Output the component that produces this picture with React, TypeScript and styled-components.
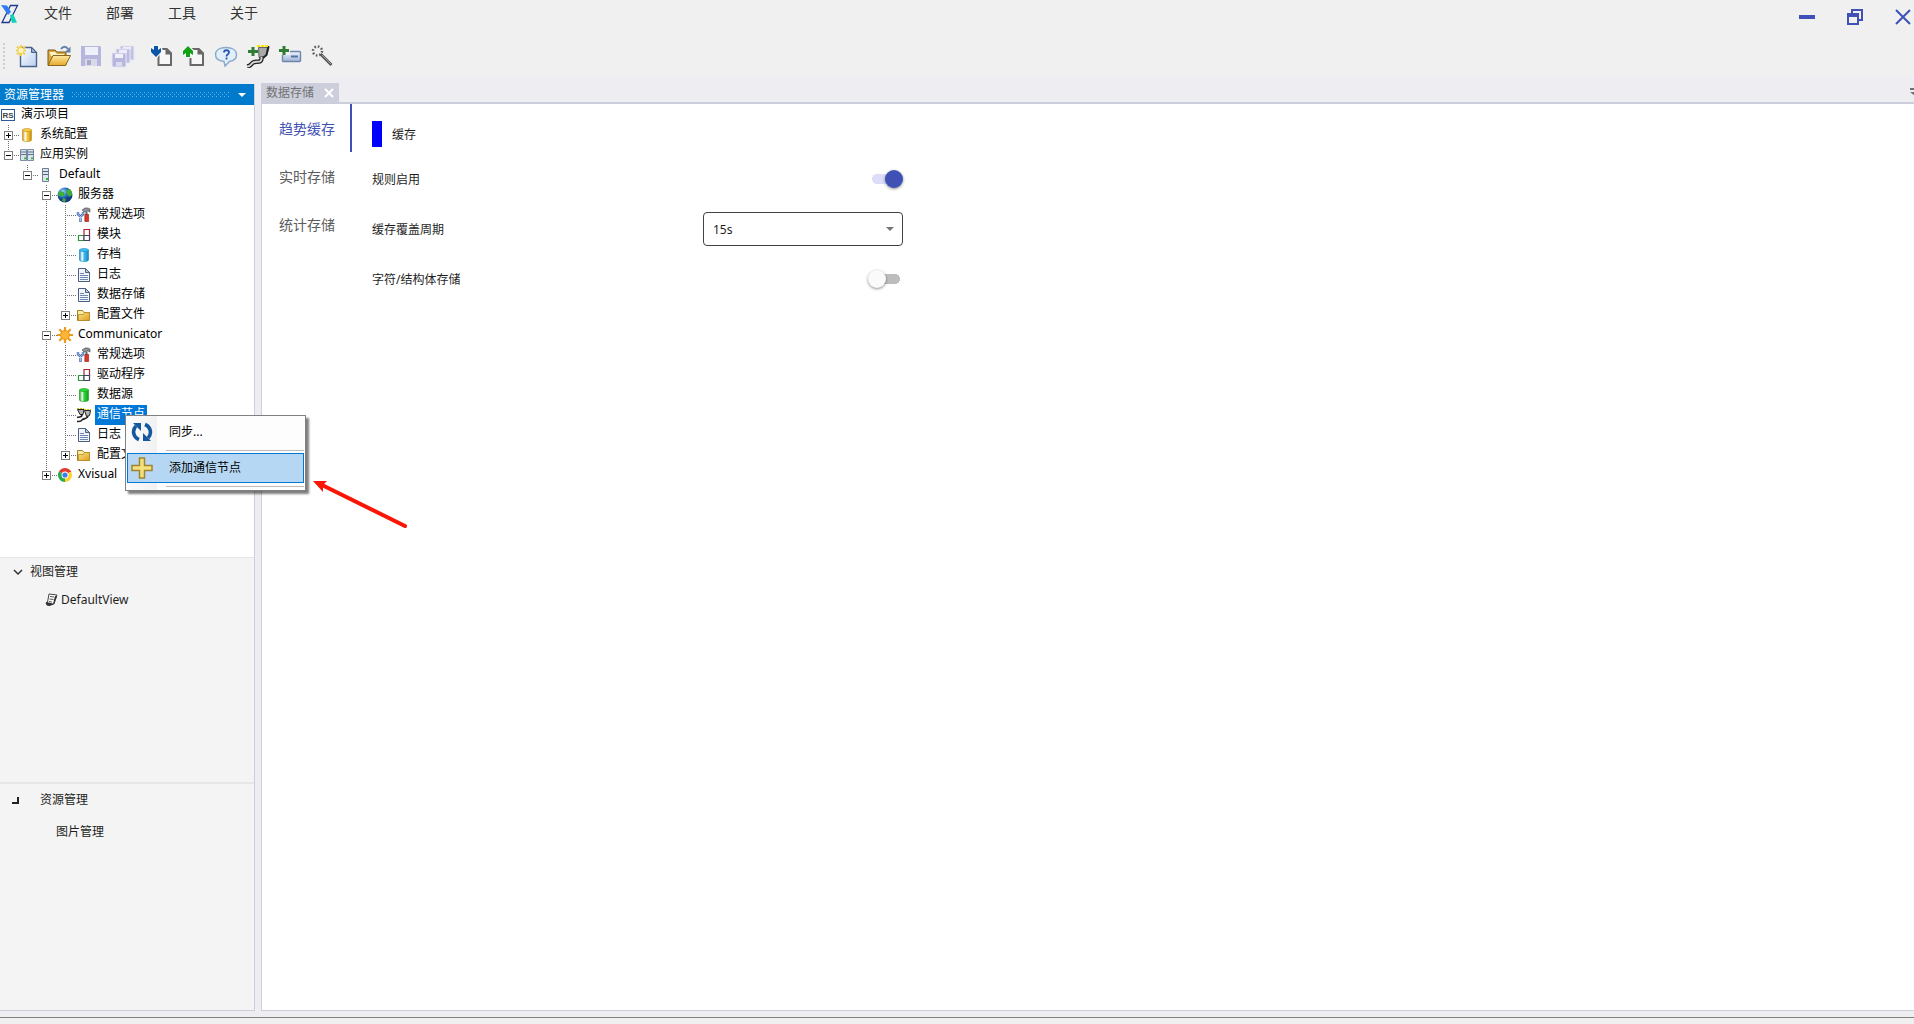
import React, { useId, useState } from "react";
import styled, { createGlobalStyle, css } from "styled-components";

const font = `"Noto Sans", "Noto Sans CJK SC", sans-serif`;
const line = "#cccedb";
const indigo = "#3f51b5";

const Global = createGlobalStyle`
  * { box-sizing: border-box; }
  body { margin: 0; background: #f0f0f0; font: 12px/20px ${font}; color: #1e1e1e; }
  button, select, input { font: inherit; color: inherit; margin: 0; padding: 0; border: 0; background: none; }
  ul { list-style: none; margin: 0; padding: 0; }
  svg { display: block; flex: none; }
`;

const Page = styled.div`
  position: relative;
  display: flex;
  flex-direction: column;
  min-height: 100vh;
  overflow: hidden;
`;

/* ---------- header ---------- */
const TitleBar = styled.header`
  display: flex;
  align-items: flex-start;
  height: 34px;
`;
const MenuBar = styled.nav`
  display: flex;
  gap: 34px;
  margin-left: 24px;
  padding-top: 2px;
  flex: 1;
`;
const MenuButton = styled.button`
  font-size: 14px;
  line-height: 22px;
  white-space: nowrap;
  color: #333;
`;
const LogoBox = styled.div`
  padding-top: 4px;
`;
const WindowButtons = styled.div`
  display: flex;
  gap: 26px;
  padding-top: 6px;
`;
const WindowButton = styled.button`
  display: grid;
  place-items: center;
  width: 22px;
  height: 22px;
`;
const ToolBar = styled.div`
  display: flex;
  align-items: center;
  height: 43px;
  padding-left: 3px;
`;
const Grip = styled.span`
  width: 2px;
  height: 26px;
  margin-right: 6px;
  background: repeating-linear-gradient(#cfcfcf 0 2px, transparent 2px 4px);
`;
const ToolButton = styled.button<{ $gap?: boolean }>`
  display: grid;
  place-items: center;
  width: 32px;
  height: 32px;
  margin-left: ${(p) => (p.$gap ? 7 : 0)}px;
`;

/* ---------- dock ---------- */
const Dock = styled.main`
  flex: 1;
  display: flex;
  gap: 6px;
  padding: 6px 0;
  background: #eeeef2;
  border-bottom: 1px solid #808080;
`;
const StatusStrip = styled.footer`
  height: 6px;
  background: #f0f0f0;
`;
const SidePanel = styled.aside`
  display: flex;
  flex-direction: column;
  width: 255px;
  flex: none;
  padding-top: 1px;
`;
const SideTitle = styled.div`
  display: flex;
  align-items: center;
  gap: 8px;
  height: 21px;
  padding: 0 8px 0 4px;
  background: #007acc;
  color: #fff;
  border-right: 1px solid ${line};
`;
const SideTitleText = styled.h2`
  margin: 0;
  font-size: 12px;
  line-height: 20px;
  font-weight: 400;
  white-space: nowrap;
`;
const DotFill = styled.svg`
  flex: 1;
  min-width: 0;
  height: 5px;
`;
const SideBody = styled.div`
  flex: 1;
  display: grid;
  grid-template-rows: 452fr 225fr 228fr;
  border: 1px solid ${line};
  border-width: 0 1px 1px 0;
`;
const TreeArea = styled.div`
  background: #fff;
  color: #000;
`;
const SubPanel = styled.section<{ $divider: number }>`
  background: #f4f4f4;
  border-top: ${(p) => p.$divider}px solid #e6e6e6;
`;
const SubHeader = styled.button<{ $pad: number; $gap: number; $tall?: boolean }>`
  display: flex;
  align-items: center;
  gap: ${(p) => p.$gap}px;
  height: ${(p) => (p.$tall ? 32 : 28)}px;
  padding-left: ${(p) => p.$pad}px;
`;
const SubItem = styled.button<{ $pad: number }>`
  display: flex;
  align-items: center;
  gap: 3px;
  height: 28px;
  padding-left: ${(p) => p.$pad}px;
  margin-top: ${(p) => (p.$pad > 50 ? 2 : 0)}px;
`;

/* ---------- tree ---------- */
const TreeRow = styled.div`
  position: relative;
  display: flex;
  height: 20px;
`;
type Vert = "none" | "half" | "full";
const Guide = styled.span<{ $vert: Vert; $horiz?: boolean }>`
  flex: none;
  width: 19px;
  height: 20px;
  padding: 6px 0 0 4px;
  background-repeat: no-repeat;
  background-image: repeating-linear-gradient(#707070 0 1px, transparent 1px 2px),
    repeating-linear-gradient(90deg, #707070 0 1px, transparent 1px 2px);
  background-position: 8px 0, 8px 10px;
  background-size: ${(p) =>
    `${p.$vert === "none" ? "0 0" : p.$vert === "half" ? "1px 11px" : "1px 20px"}, ${p.$horiz ? "11px 1px" : "0 0"}`};
`;
const Expander = styled.button<{ $open: boolean }>`
  display: block;
  width: 9px;
  height: 9px;
  border: 1px solid #808080;
  background-color: #fff;
  background-repeat: no-repeat;
  background-position: center;
  background-image: linear-gradient(#000, #000), linear-gradient(#000, #000);
  background-size: 5px 1px, ${(p) => (p.$open ? "0 0" : "1px 5px")};
`;
const IconCell = styled.span`
  display: grid;
  place-items: center;
  width: 16px;
  height: 20px;
  flex: none;
`;
const NodeLabel = styled.button<{ $selected?: boolean }>`
  margin-left: 3px;
  padding: 0 2px 2px;
  line-height: 18px;
  white-space: nowrap;
  ${(p) =>
    p.$selected &&
    css`
      background: #0078d7;
      color: #fff;
    `}
`;

/* ---------- context menu ---------- */
const ContextMenu = styled.div`
  position: absolute;
  z-index: 2;
  left: 125px;
  top: 10px;
  width: 181px;
  padding: 1px;
  border: 1px solid #808080;
  background: linear-gradient(90deg, #fcfcfc, #f1f1f1 31px, #fdfdfd 31px);
  box-shadow: 3px 3px 2px rgba(0, 0, 0, 0.5);
`;
const MenuItem = styled.button<{ $active?: boolean }>`
  display: flex;
  align-items: center;
  gap: 16px;
  width: 100%;
  height: 30px;
  padding-left: 3px;
  border: 1px solid ${(p) => (p.$active ? "#0078d7" : "transparent")};
  background: ${(p) => (p.$active ? "#b5d7f3" : "transparent")};
`;
const Separator = styled.hr`
  height: 1px;
  margin: 3px 0 2px 39px;
  border: 0;
  background: #bdbdbd;
`;
const Pointer = styled.svg`
  position: absolute;
  z-index: 3;
  left: 310px;
  top: 476px;
  pointer-events: none;
`;

/* ---------- document area ---------- */
const DocArea = styled.section`
  flex: 1;
  min-width: 0;
  display: flex;
  flex-direction: column;
  border: 1px solid ${line};
  border-width: 0 0 1px 1px;
`;
const TabStrip = styled.div`
  display: flex;
  justify-content: space-between;
  height: 21px;
  background: #eeeef2;
  border-bottom: 2px solid ${line};
`;
const DocTab = styled.div`
  display: flex;
  align-items: center;
  gap: 10px;
  padding: 1px 5px 0 4px;
  background: ${line};
  color: #717171;
`;
const Overflow = styled.button`
  width: 4px;
  padding-top: 5px;
  overflow: hidden;
  align-self: flex-start;
`;
const DocBody = styled.div`
  flex: 1;
  display: flex;
  background: #fff;
`;
const SideTabs = styled.nav`
  width: 90px;
  flex: none;
`;
const SideTab = styled.button<{ $active: boolean }>`
  display: block;
  width: 100%;
  height: 48px;
  padding-left: 17px;
  padding-top: 1px;
  text-align: left;
  font-size: 14px;
  color: ${(p) => (p.$active ? indigo : "#5c5c5c")};
  border-right: 2px solid ${(p) => (p.$active ? indigo : "transparent")};
`;
const Form = styled.form`
  flex: 1;
  max-width: 551px;
  padding: 17px 0 0 20px;
`;
const Heading = styled.h3`
  display: flex;
  align-items: center;
  gap: 10px;
  height: 26px;
  margin: 0 0 7px;
  font-size: 12px;
  line-height: 28px;
  font-weight: 400;
  &::before {
    content: "";
    width: 10px;
    height: 26px;
    background: #00f;
  }
`;
const HeadingText = styled.span`
  padding-top: 2px;
`;
const Field = styled.div`
  display: flex;
  align-items: center;
  justify-content: space-between;
  height: 50px;
`;
const FieldLabel = styled.label`
  padding-top: 2px;
`;
const Switch = styled.input`
  appearance: none;
  display: flex;
  width: 35px;
  height: 18px;
  background: radial-gradient(circle at 27px 9px, #bdbdbd 5px, transparent 5px),
    linear-gradient(#bdbdbd, #bdbdbd) 9px 4px / 18px 10px no-repeat;
  &::before {
    content: "";
    flex: none;
    width: 18px;
    height: 18px;
    border-radius: 9px;
    background: #fafafa;
    box-shadow: 0 1px 3px rgba(0, 0, 0, 0.45);
  }
  &:checked {
    background: radial-gradient(circle at 9px 9px, #dcddf8 5px, transparent 5px),
      linear-gradient(#dcddf8, #dcddf8) 9px 4px / 17px 10px no-repeat;
  }
  &:checked::before {
    margin-left: 17px;
    background: ${indigo};
  }
`;
const SelectWrap = styled.div`
  display: grid;
  grid-template-columns: 1fr 16px;
  align-items: center;
  width: 200px;
  height: 34px;
  border: 1px solid #424242;
  border-radius: 4px;
  & > * {
    grid-row: 1;
  }
  & > svg {
    grid-column: 2;
    pointer-events: none;
  }
`;
const Select = styled.select`
  appearance: none;
  grid-column: 1 / 3;
  height: 100%;
  padding: 2px 0 0 9px;
`;

/* ---------- icons ---------- */
const Logo = () => (
  <svg width="20" height="20" viewBox="0 0 20 20">
    <path d="M10.500 1.500h7L9 18.500H2z" fill="#f0f0f0" stroke="#1d3a8c" strokeWidth="1.300" />
    <path d="M1 1l6 .5L11 8l-3 3z" fill="#2e7bf6" />
    <path d="M10 11l3-1 4 8.500-5 .5z" fill="#12d3b4" />
  </svg>
);

const SheetArt = () => (
  <>
    <path d="M8.500 5h8l4.500 4.500V21H8.500z" fill="#f7f7f7" stroke="#686868" strokeWidth="2" />
    <path d="M15.500 4H17l5 5v1.500h-6.500z" fill="#686868" />
  </>
);
const tools: { name: string; gap?: boolean; art: React.ReactNode }[] = [
  {
    name: "新建",
    art: (
      <>
        <defs>
          <linearGradient id="pg" x2="1" y2="1"><stop stopColor="#fff" /><stop offset="1" stopColor="#b9cff0" /></linearGradient>
          <linearGradient id="fo" x2="0" y2="1"><stop stopColor="#fde9a0" /><stop offset="1" stopColor="#e5a82a" /></linearGradient>
        </defs>
        <path d="M5.500 3.500h11l5 5v14h-16z" fill="url(#pg)" stroke="#4a628c" strokeWidth="1.400" />
        <path d="M16.500 3.500v5h5z" fill="#93a9cf" stroke="#4a628c" />
        <path d="M6 1v11M1 6.500h10M2 2.500l8 8M10 2.500l-8 8" stroke="#f3cf4a" strokeWidth="2" />
        <circle cx="6" cy="6.500" r="2.500" fill="#fff6c4" />
      </>
    ),
  },
  {
    name: "打开",
    art: (
      <>
        <path d="M1 21V6h7l2 2h9v13z" fill="#d9a93c" stroke="#7a5b1c" />
        <path d="M2.500 8H8l2 2h7v2H4z" fill="#fdf3c8" />
        <path d="M1 21.500L6 11.500h17.500l-5 10z" fill="url(#fo)" stroke="#8a661b" />
        <path d="M14 5c2-3 5-3 7 0" fill="none" stroke="#6482a8" strokeWidth="2" />
        <path d="M23.500 2.500v6h-6z" fill="#6482a8" />
      </>
    ),
  },
  {
    name: "保存",
    art: (
      <>
        <path d="M2 2h19l1 1v19H2z" fill="#b7b6de" />
        <path d="M6 3h13v8H6z" fill="#f0f0fa" />
        <path d="M6 15h12v7H6z" fill="#d9d9ea" />
        <path d="M8 16h4v5H8z" fill="#a8abc6" />
      </>
    ),
  },
  {
    name: "全部保存",
    art: (
      <>
        <path d="M9 2h14v14H9z" fill="#c3c2e3" stroke="#e6e6f4" />
        <path d="M12 3h8v3h-8z" fill="#eeeef8" />
        <path d="M5 5h14v14H5z" fill="#bcbbe0" stroke="#e6e6f4" />
        <path d="M8 6h8v3H8z" fill="#eeeef8" />
        <path d="M1 9h14v14H1z" fill="#b7b6de" stroke="#e6e6f4" />
        <path d="M4 10h8v4H4z" fill="#f0f0fa" />
        <path d="M5 18h6v4H5z" fill="#dcdcec" />
      </>
    ),
  },
  {
    name: "导入",
    gap: true,
    art: (
      <>
        <SheetArt />
        <path d="M1 1h10l2 6-6 7h-2L0 8z" fill="#f6f6f6" />
        <path d="M4 2h4v4l3-2v4l-5 5-5-5V4l3 2z" fill="#0a55a5" />
      </>
    ),
  },
  {
    name: "导出",
    art: (
      <>
        <SheetArt />
        <path d="M0 7l6-6 7 6v3l-3 4H4z" fill="#f6f6f6" />
        <path d="M4 13V9l-3 2V7l5-5 5 5v4L8 9v4z" fill="#12a114" />
      </>
    ),
  },
  {
    name: "帮助",
    art: (
      <>
        <path d="M12 3.500c6 0 10.500 2.500 10.500 7 0 4-3 6.500-7 7L11 22l-1-4.500c-5-.5-8.500-3-8.500-7 0-4.500 4.500-7 10.500-7z" fill="#e1effa" stroke="#8aa9ca" strokeWidth="1.400" />
        <path d="M10 8.500c0-3 5-3 5 0 0 2-2.500 1.500-2.500 4M12.500 13.500v2" fill="none" stroke="#2a55b5" strokeWidth="1.800" />
      </>
    ),
  },
  {
    name: "添加通道",
    art: (
      <>
        <path d="M12.500 3.500H23l-2 7-4 3h-4z" fill="#a9a9a9" stroke="#666" />
        <path d="M22.500 2l-2 9-3 2.500h-3" fill="none" stroke="#222" strokeWidth="2" />
        <path d="M15.500 13c.5 6-3 4.500-7 5-4 .5-2 4-7.500 4.500" fill="none" stroke="#222" strokeWidth="4.500" />
        <path d="M15.500 13c.5 6-3 4.500-7 5-4 .5-2 4-7.500 4.500" fill="none" stroke="#d4d4d4" strokeWidth="2" />
        <path d="M11 2h12" stroke="#f7ea00" strokeWidth="2" strokeDasharray="3 1" />
        <path d="M7 3v9M2 7.500h10" stroke="#2e7d32" strokeWidth="3" />
      </>
    ),
  },
  {
    name: "添加设备",
    art: (
      <>
        <defs>
          <linearGradient id="dv" x2="0" y2="1"><stop stopColor="#eef4fc" /><stop offset="1" stopColor="#9fb4d6" /></linearGradient>
        </defs>
        <rect x="4.500" y="7.500" width="18" height="10" rx="1" fill="url(#dv)" stroke="#6f86ac" strokeWidth="1.400" />
        <path d="M13 12.500h7" stroke="#5873a2" strokeWidth="2" />
        <path d="M1 1h11v10H1z" fill="#f0f0f0" />
        <path d="M6 2v9M1 6.500h10" stroke="#2e7d32" strokeWidth="3" />
      </>
    ),
  },
  {
    name: "向导",
    art: (
      <>
        <circle cx="7.500" cy="7" r="4.500" fill="none" stroke="#5a5a5a" strokeWidth="2.500" strokeDasharray="1.600 1.900" />
        <path d="M10.500 10l11 11" stroke="#5a5a5a" strokeWidth="3" />
        <path d="M12 11l9 9" stroke="#9a9a9a" />
      </>
    ),
  },
];

const Cyl = ({ a, b }: { a: string; b: string }) => {
  const id = useId();
  return (
    <svg width="16" height="16" viewBox="0 0 16 16">
      <defs>
        <linearGradient id={id}><stop stopColor={b} /><stop offset=".3" stopColor="#fff" /><stop offset=".5" stopColor={a} /><stop offset="1" stopColor={b} /></linearGradient>
      </defs>
      <path d="M3.500 3v10c0 2 9 2 9 0V3z" fill={`url(#${id})`} stroke={b} strokeWidth=".6" />
      <ellipse cx="8" cy="3" rx="4.500" ry="1.500" fill={a} stroke={b} strokeWidth=".6" />
    </svg>
  );
};
const Tower = ({ x = 0 }: { x?: number }) => (
  <g transform={`translate(${x} 0)`}>
    <path d="M.5 1.500h6v13h-6z" fill="#dbe4ee" stroke="#6b7f96" />
    <path d="M1 4.500h5M1 7.500h5" stroke="#53677f" />
    <path d="M4 11h2v2H4z" fill="#2cbd2c" />
  </g>
);
const icons: Record<string, React.ReactNode> = {
  rs: (
    <svg width="16" height="16" viewBox="0 0 16 16" fontFamily="Liberation Sans" fontWeight="700" fontSize="8">
      <rect x="1.500" y="2.500" width="13" height="11" fill="#fff" stroke="#2b5a94" />
      <text x="2.500" y="11" fill="#444">RS</text>
    </svg>
  ),
  gold: <Cyl a="#f6cf4f" b="#c58b0a" />,
  blue: <Cyl a="#3fc0f0" b="#1486c0" />,
  green: <Cyl a="#2edb3a" b="#109a1c" />,
  racks: (
    <svg width="16" height="12" viewBox="0 1 16 14" preserveAspectRatio="none"><Tower x={1} /><Tower x={8} /></svg>
  ),
  rack: (
    <svg width="16" height="16" viewBox="0 0 16 16"><Tower x={4} /></svg>
  ),
  globe: (
    <svg width="16" height="16" viewBox="0 0 16 16">
      <defs><radialGradient id="gl" cx=".35" cy=".3"><stop stopColor="#b5dcff" /><stop offset=".6" stopColor="#2b78d2" /><stop offset="1" stopColor="#153c84" /></radialGradient></defs>
      <circle cx="8" cy="8" r="7.500" fill="url(#gl)" />
      <path d="M1 8c0-2 1-3 2-4l4 1 1 3-3 2zM9 3l4-1c2 2 2 4 2 6l-3 2-2-3zM6 11l3 1-1 3-3-1z" fill="#3fae3b" />
    </svg>
  ),
  sun: (
    <svg width="16" height="16" viewBox="0 0 16 16">
      <path d="M8 0v16M0 8h16M2.300 2.300l11.400 11.400M13.700 2.300L2.300 13.700" stroke="#f09a1c" strokeWidth="2.200" />
      <circle cx="8" cy="8" r="4.500" fill="#fbb437" stroke="#ee960c" />
    </svg>
  ),
  chrome: (
    <svg width="16" height="16" viewBox="0 0 16 16">
      <path d="M8 8L1.930 4.500A7 7 0 0 1 14.060 4.500z" fill="#e33b2e" />
      <path d="M8 8L1.930 4.500A7 7 0 0 0 8 15z" fill="#2da94f" />
      <path d="M8 8L14.060 4.500A7 7 0 0 1 8 15z" fill="#fdd22f" />
      <path d="M8 4.500h6.060" stroke="#e33b2e" />
      <circle cx="8" cy="8" r="3.500" fill="#fff" />
      <circle cx="8" cy="8" r="2.600" fill="#3b7ded" />
    </svg>
  ),
  tools: (
    <svg width="16" height="16" viewBox="0 0 16 16">
      <path d="M2 5v2.500L4.500 9.500 7 7.500V5M4.500 9v6" fill="none" stroke="#3f68b0" strokeWidth="2.400" />
      <path d="M2 5v2.500L4.500 9.500 7 7.500V5M4.500 9v5.500" fill="none" stroke="#c3d5f2" strokeWidth=".8" />
      <path d="M6 3l3-2h3l2 1v3l-2-1-3 1H8z" fill="#8b9298" stroke="#444" strokeWidth=".6" />
      <path d="M9.500 5h2v3h-2z" fill="#666" />
      <path d="M8.800 7.500h3.800v7H8.800z" fill="#d8382c" stroke="#8b1510" strokeWidth=".6" />
    </svg>
  ),
  blocks: (
    <svg width="16" height="16" viewBox="0 0 16 16" fill="#fff">
      <path d="M2.500 8.500H8v5H2.500z" stroke="#2d9440" strokeWidth="1.200" />
      <path d="M8 2.500h5.500v6H8z" stroke="#b02332" strokeWidth="1.200" />
      <path d="M8 8.500h5.500v5H8z" stroke="#44405e" strokeWidth="1.200" />
    </svg>
  ),
  doc: (
    <svg width="16" height="16" viewBox="0 0 16 16">
      <path d="M2.500 1.500h7l4 4v9h-11z" fill="#f2f6fc" stroke="#4b5f80" />
      <path d="M9.500 1.500v4h4z" fill="#b9c8de" stroke="#4b5f80" />
      <path d="M4 6.500h4M4 8.500h8M4 10.500h8M4 12.500h8" fill="none" stroke="#7088ad" />
    </svg>
  ),
  folder: (
    <svg width="16" height="16" viewBox="0 0 16 16">
      <defs><linearGradient id="fd" x2="1" y2="1"><stop stopColor="#fde58b" /><stop offset="1" stopColor="#dd9d20" /></linearGradient></defs>
      <path d="M1.500 13.500v-10h5l1.500 2h5.500v8z" fill="#fbe9a4" stroke="#a1812e" />
      <path d="M2.500 13.500v-6h5l1-2h5v8z" fill="url(#fd)" stroke="#b88d22" strokeWidth=".8" />
    </svg>
  ),
  plug: (
    <svg width="16" height="16" viewBox="0 0 16 16">
      <path d="M1.500 2.500H8l-1 5H4zM8.500 3.500h6l-1 5-3 1z" fill="#b5b5b5" stroke="#222" />
      <path d="M6 7.500c0 3.500-2 2-5 3M12 9c-1 4-4 1.500-6 4-1 2-3 1.500-5 1.500" fill="none" stroke="#222" strokeWidth="1.600" />
      <path d="M1 1.500h7M8 2.500h7" stroke="#d8cc18" strokeDasharray="2 1" />
    </svg>
  ),
};

/* ---------- data ---------- */
type TreeNode = { label: string; icon: string; open?: boolean; children?: TreeNode[] };
const tree: TreeNode[] = [
  { label: "系统配置", icon: "gold", children: [] },
  {
    label: "应用实例", icon: "racks", open: true,
    children: [
      {
        label: "Default", icon: "rack", open: true,
        children: [
          {
            label: "服务器", icon: "globe", open: true,
            children: [
              { label: "常规选项", icon: "tools" },
              { label: "模块", icon: "blocks" },
              { label: "存档", icon: "blue" },
              { label: "日志", icon: "doc" },
              { label: "数据存储", icon: "doc" },
              { label: "配置文件", icon: "folder", children: [] },
            ],
          },
          {
            label: "Communicator", icon: "sun", open: true,
            children: [
              { label: "常规选项", icon: "tools" },
              { label: "驱动程序", icon: "blocks" },
              { label: "数据源", icon: "green" },
              { label: "通信节点", icon: "plug" },
              { label: "日志", icon: "doc" },
              { label: "配置文件", icon: "folder", children: [] },
            ],
          },
          { label: "Xvisual", icon: "chrome", children: [] },
        ],
      },
    ],
  },
];

const NodeMenu = () => (
  <ContextMenu role="menu">
    <MenuItem role="menuitem">
      <svg width="22" height="22" viewBox="0 0 22 22" fill="none" stroke="#1558a0" strokeWidth="3.600">
        <path d="M8 18.500C2 16 1 9 5 5" />
        <path d="M14 3.500c6 2.500 7 9.500 3 13.500" />
        <path d="M2 2h8v8z" fill="#1558a0" stroke="none" />
        <path d="M20 20h-8v-8z" fill="#1558a0" stroke="none" />
      </svg>
      同步...
    </MenuItem>
    <Separator />
    <MenuItem role="menuitem" $active>
      <svg width="22" height="22" viewBox="0 0 22 22">
        <path d="M8.500 1h5v7.500H21v5h-7.500V21h-5v-7.500H1v-5h7.500z" fill="#f6e07c" stroke="#9f8430" strokeWidth="1.500" />
      </svg>
      添加通信节点
    </MenuItem>
    <Separator />
  </ContextMenu>
);

const Branch = ({ nodes, trail }: { nodes: TreeNode[]; trail: boolean[] }) => (
  <ul role="group">
    {nodes.map((node, i) => {
      const more = i < nodes.length - 1;
      const selected = node.label === "通信节点";
      return (
        <li key={i} role="treeitem" aria-selected={selected}>
          <TreeRow>
            {trail.map((on, k) => (
              <Guide key={k} $vert={on ? "full" : "none"} />
            ))}
            <Guide $vert={more ? "full" : "half"} $horiz>
              {node.children && <Expander $open={!!node.open} aria-label={node.open ? "折叠" : "展开"} />}
            </Guide>
            <IconCell>{icons[node.icon]}</IconCell>
            <NodeLabel $selected={selected}>{node.label}</NodeLabel>
            {selected && <NodeMenu />}
          </TreeRow>
          {node.open && node.children && <Branch nodes={node.children} trail={[...trail, more]} />}
        </li>
      );
    })}
  </ul>
);

export default function App() {
  const [tab, setTab] = useState("趋势缓存");
  return (
    <Page>
      <Global />
      <TitleBar>
        <LogoBox><Logo /></LogoBox>
        <MenuBar>
          {["文件", "部署", "工具", "关于"].map((m) => (
            <MenuButton key={m}>{m}</MenuButton>
          ))}
        </MenuBar>
        <WindowButtons>
          <WindowButton aria-label="最小化">
            <svg width="16" height="16"><path d="M0 6h16v4H0z" fill={indigo} /></svg>
          </WindowButton>
          <WindowButton aria-label="还原">
            <svg width="16" height="16" fill="none" stroke={indigo} strokeWidth="2">
              <path d="M5 4V1h10v10h-3M1 5h10v10H1z" />
              <path d="M0 6h12" strokeWidth="4" />
            </svg>
          </WindowButton>
          <WindowButton aria-label="关闭">
            <svg width="16" height="16"><path d="M1 1l14 14M15 1L1 15" stroke={indigo} strokeWidth="2" /></svg>
          </WindowButton>
        </WindowButtons>
      </TitleBar>
      <ToolBar role="toolbar">
        <Grip />
        {tools.map((t) => (
          <ToolButton key={t.name} $gap={t.gap} aria-label={t.name}>
            <svg width="24" height="24" viewBox="0 0 24 24">{t.art}</svg>
          </ToolButton>
        ))}
      </ToolBar>

      <Dock>
        <SidePanel>
          <SideTitle>
            <SideTitleText>资源管理器</SideTitleText>
            <DotFill>
              <defs>
                <pattern id="dots" width="4" height="4" patternUnits="userSpaceOnUse">
                  <path d="M0 0h1v1H0zM2 2h1v1H2z" fill="#6cb4e6" />
                </pattern>
              </defs>
              <rect width="100%" height="5" fill="url(#dots)" />
            </DotFill>
            <svg width="8" height="4"><path d="M0 0h8L4 4z" fill="#fff" /></svg>
          </SideTitle>
          <SideBody>
            <TreeArea role="tree">
              <TreeRow>
                <IconCell>{icons.rs}</IconCell>
                <NodeLabel>演示项目</NodeLabel>
              </TreeRow>
              <Branch nodes={tree} trail={[]} />
            </TreeArea>
            <SubPanel $divider={1}>
              <SubHeader $pad={13} $gap={7}>
                <svg width="10" height="8" fill="none" stroke="#333" strokeWidth="1.500"><path d="M1 2l4 4 4-4" /></svg>
                视图管理
              </SubHeader>
              <SubItem $pad={45}>
                <svg width="13" height="14" viewBox="0 0 13 14">
                  <path d="M4 1l8 1-3 9-7 1z" fill="#fff" stroke="#444" />
                  <path d="M5 3.500l4 .5M4.500 6l4 .5M4 8.500l3 .5" stroke="#555" />
                  <path d="M1 9c-1 3 2 4 4 4l4-2-3-1zM10 3h2L9 11H8z" fill="#333" />
                </svg>
                DefaultView
              </SubItem>
            </SubPanel>
            <SubPanel $divider={2}>
              <SubHeader $pad={12} $gap={21} $tall>
                <svg width="7" height="7"><path d="M5 0h2v7H0V5h5z" fill="#222" /></svg>
                资源管理
              </SubHeader>
              <SubItem $pad={56}>图片管理</SubItem>
            </SubPanel>
          </SideBody>
        </SidePanel>

        <DocArea>
          <TabStrip>
            <DocTab>
              数据存储
              <button aria-label="关闭标签">
                <svg width="10" height="10"><path d="M1 1l8 8M9 1L1 9" stroke="#fff" strokeWidth="2" /></svg>
              </button>
            </DocTab>
            <Overflow aria-label="更多标签">
              <svg width="9" height="8"><path d="M0 0h9v2H0zM0 4h9L5 8z" fill="#717171" /></svg>
            </Overflow>
          </TabStrip>
          <DocBody>
            <SideTabs>
              {["趋势缓存", "实时存储", "统计存储"].map((t) => (
                <SideTab key={t} $active={t === tab} onClick={() => setTab(t)}>{t}</SideTab>
              ))}
            </SideTabs>
            <Form>
              <Heading><HeadingText>缓存</HeadingText></Heading>
              <Field>
                <FieldLabel htmlFor="rule">规则启用</FieldLabel>
                <Switch id="rule" type="checkbox" defaultChecked />
              </Field>
              <Field>
                <FieldLabel htmlFor="period">缓存覆盖周期</FieldLabel>
                <SelectWrap>
                  <Select id="period" defaultValue="15s">
                    <option>15s</option>
                  </Select>
                  <svg width="8" height="4"><path d="M0 0h8L4 4z" fill="#757575" /></svg>
                </SelectWrap>
              </Field>
              <Field>
                <FieldLabel htmlFor="struct">字符/结构体存储</FieldLabel>
                <Switch id="struct" type="checkbox" />
              </Field>
            </Form>
          </DocBody>
        </DocArea>
      </Dock>
      <StatusStrip />

      <Pointer width="100" height="56" viewBox="0 0 100 56" aria-hidden="true">
        <path d="M10 8l85 42" stroke="#fb1505" strokeWidth="4" strokeLinecap="round" />
        <path d="M3 5l14 0-4 4 0 7z" fill="#fb1505" />
      </Pointer>
    </Page>
  );
}
